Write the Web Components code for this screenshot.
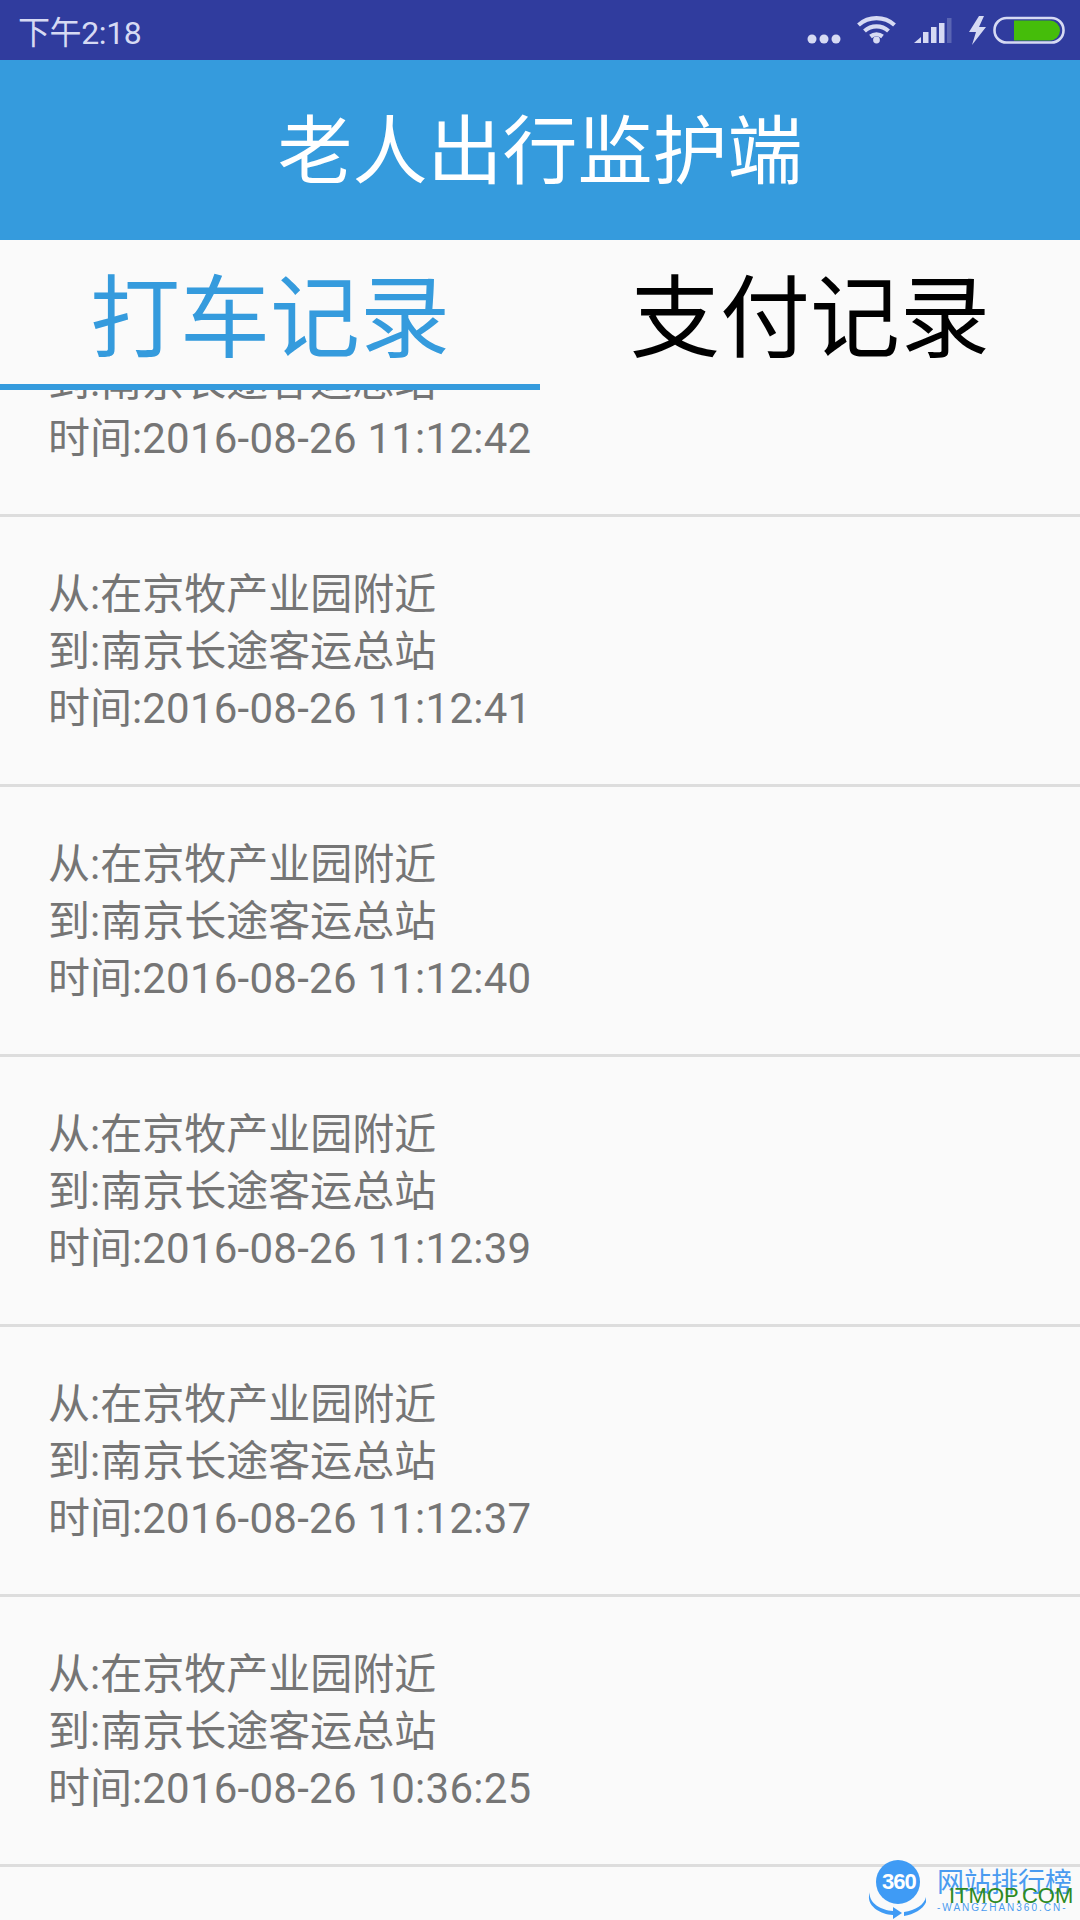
<!DOCTYPE html>
<html lang="zh-CN">
<head>
<meta charset="utf-8">
<title>老人出行监护端</title>
<style>
  html, body { margin: 0; height: 1920px; overflow: hidden; background: #fafafa; }
  body { display: flex; flex-direction: column; font-family: Roboto, "Noto Sans CJK SC", sans-serif; }
</style>
</head>
<body>
<status-bar time="下午2:18"></status-bar>
<app-bar>老人出行监护端</app-bar>
<record-tabs first="打车记录" second="支付记录"></record-tabs>
<trip-list>
  <trip-row time="2016-08-26 11:12:42"></trip-row>
  <trip-row time="2016-08-26 11:12:41"></trip-row>
  <trip-row time="2016-08-26 11:12:40"></trip-row>
  <trip-row time="2016-08-26 11:12:39"></trip-row>
  <trip-row time="2016-08-26 11:12:37"></trip-row>
  <trip-row time="2016-08-26 10:36:25"></trip-row>
</trip-list>
<site-badge></site-badge>

<script>
class StatusBar extends HTMLElement {
  connectedCallback() {
    this.attachShadow({ mode: 'open' });
    this.shadowRoot.innerHTML = `
      <style>
        :host { display: flex; flex: none; height: 60px; background: #303c9e; color: #d6daf3;
                align-items: center; justify-content: space-between; padding-left: 18px; }
        .time { font-size: 32px; letter-spacing: -0.4px; }
        svg { display: block; }
      </style>
      <span class="time">${this.getAttribute('time')}</span>
      <svg width="280" height="60" viewBox="800 0 280 60" fill="#d6daf3">
        <circle cx="812" cy="39" r="4.5"/><circle cx="824" cy="39" r="4.5"/><circle cx="836" cy="39" r="4.5"/>
        <g fill="none" stroke="#d6daf3" stroke-width="4.2">
          <path d="M858.5 25 a27 27 0 0 1 36 0"/>
          <path d="M864.5 31 a18 18 0 0 1 24 0"/>
          <path d="M870.5 36.5 a9.5 9.5 0 0 1 12 0"/>
        </g>
        <circle cx="876.5" cy="40" r="3.4"/>
        <path d="M914 43 l7-6 v6z"/>
        <rect x="923" y="32" width="5.5" height="11"/>
        <rect x="931" y="27" width="5.5" height="16"/>
        <rect x="939" y="23" width="5.5" height="20"/>
        <rect x="947" y="18" width="4.5" height="25" fill="#5a65b3"/>
        <path d="M979 16 L969 32 H976 L972 45 L986 27 H979 L984 16z"/>
        <rect x="994.5" y="18" width="69" height="24.5" rx="12" fill="none" stroke="#d6daf3" stroke-width="2.6"/>
        <path d="M1014 20.5 H1050 a10 10 0 0 1 10 10 a10 10 0 0 1 -10 10 H1014z" fill="#45bd0a"/>
      </svg>`;
  }
}

class AppBar extends HTMLElement {
  constructor() {
    super();
    this.attachShadow({ mode: 'open' });
    this.shadowRoot.innerHTML = `
      <style>
        :host { display: flex; flex: none; box-sizing: border-box; height: 180px; padding-bottom: 10px;
                background: #359bdd; color: #fff;
                align-items: center; justify-content: center; font-size: 75px; }
      </style>
      <slot></slot>`;
  }
}

class RecordTabs extends HTMLElement {
  connectedCallback() {
    this.attachShadow({ mode: 'open' });
    this.shadowRoot.innerHTML = `
      <style>
        :host { display: grid; grid-template-columns: 1fr 1fr; flex: none; height: 150px;
                background: #fafafa; font-size: 90px; position: relative; z-index: 1; }
        div { display: flex; align-items: center; justify-content: center; box-sizing: border-box;
              height: 150px; padding-bottom: 9px; color: #000; }
        .on { color: #359bdd; border-bottom: 6px solid #359bdd; padding-bottom: 3px; }
      </style>
      <div class="on">${this.getAttribute('first')}</div>
      <div>${this.getAttribute('second')}</div>`;
  }
}

// list is scrolled a bit, first row goes under the tabs
class TripList extends HTMLElement {
  constructor() {
    super();
    this.attachShadow({ mode: 'open' });
    this.shadowRoot.innerHTML = `
      <style>
        :host { display: block; flex: 1; min-height: 0; overflow: hidden; }
        .scroll { margin-top: -143px; }
      </style>
      <div class="scroll"><slot></slot></div>`;
  }
}

class TripRow extends HTMLElement {
  connectedCallback() {
    this.attachShadow({ mode: 'open' });
    this.shadowRoot.innerHTML = `
      <style>
        :host { display: block; box-sizing: border-box; height: 270px; padding: 49px 0 0 48px;
                border-bottom: 3px solid #dddddd; color: #757575; font-size: 42px; line-height: 57px; }
        span { letter-spacing: 0.25px; }
      </style>
      <div>从:在京牧产业园附近</div>
      <div>到:南京长途客运总站</div>
      <div>时间:<span>${this.getAttribute('time')}</span></div>`;
  }
}

class SiteBadge extends HTMLElement {
  connectedCallback() {
    this.attachShadow({ mode: 'open' });
    this.shadowRoot.innerHTML = `
      <style>
        :host { position: absolute; left: 866px; top: 1858px; width: 214px; height: 62px; display: block; }
        svg { position: absolute; left: 0; top: 0; }
        span { position: absolute; white-space: nowrap; }
        .name { left: 71px; top: 10px; font-size: 27px; line-height: 30px; color: #4a9bf0; }
        .mark { left: 83px; top: 26px; font: 22px/24px "Liberation Sans", sans-serif; color: #2f8a1f; }
        .url { left: 71px; top: 44px; font: 10px/11px "Liberation Sans", sans-serif; letter-spacing: 2px; color: #4a9bf0; }
        .logo { left: 16px; top: 10px; width: 32px; text-align: center; font: bold 22px/28px "Liberation Sans Narrow", "Liberation Sans", sans-serif; color: #fff; letter-spacing: -1px; }
      </style>
      <svg width="60" height="62" viewBox="0 0 60 62">
        <circle cx="32" cy="24" r="22" fill="#3f9bf5"/>
        <path d="M4 34 C2 44 14 52 27 53 V49 L36 55 L27 61 V57 C12 56 -1 46 4 34z" fill="#3f9bf5"/>
        <path d="M60 34 C62 44 52 52 38 54 V58 C52 56 65 46 60 34z" fill="#3f9bf5"/>
      </svg>
      <span class="logo">360</span>
      <span class="name">网站排行榜</span>
      <span class="url">-WANGZHAN360.CN-</span>
      <span class="mark">ITMOP.COM</span>`;
  }
}

customElements.define('status-bar', StatusBar);
customElements.define('app-bar', AppBar);
customElements.define('record-tabs', RecordTabs);
customElements.define('trip-list', TripList);
customElements.define('trip-row', TripRow);
customElements.define('site-badge', SiteBadge);
</script>
</body>
</html>
